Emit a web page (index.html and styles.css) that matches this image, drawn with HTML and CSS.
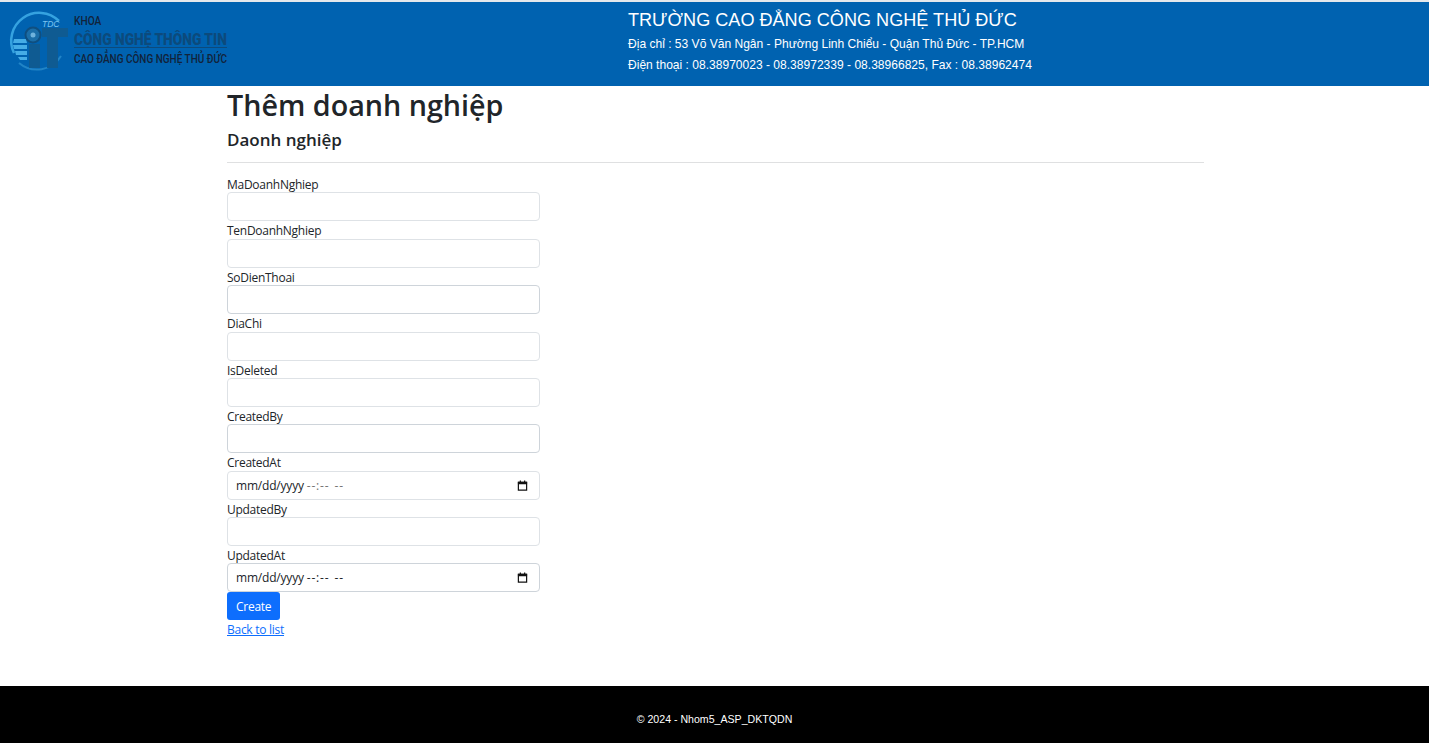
FILE: index.html
```html
<!DOCTYPE html>
<html lang="vi">
<head>
<meta charset="utf-8">
<title>Thêm doanh nghiệp</title>
<link rel="stylesheet" href="styles.css">
</head>
<body>
<header class="site-header">
  <div class="brand">
    <svg class="logo" viewBox="0 0 232 70" width="232" height="70" aria-label="Khoa Công nghệ thông tin">
      <path d="M14 47 A28 28 0 0 1 59 15" fill="none" stroke="#35a2e0" stroke-width="2.500"/>
      <path d="M19 57 A28 28 0 0 0 61 50" fill="none" stroke="#2184c6" stroke-width="2"/>
      <path d="M14 33h12l1 4H13zM13 39h14v4H14zM15 45h12v4H16zM18 51h9v3H20z" fill="#45ace6"/>
      <circle cx="33" cy="29" r="7.500" fill="#1b6ea8" stroke="#0f4f80" stroke-width="2"/>
      <circle cx="33" cy="29" r="2.500" fill="#6fb2dc"/>
      <path d="M29 38h11v24H29z" fill="#0f5b92"/>
      <path d="M42 22H68V31H58V62H47V31H42Z" fill="#0f5b92"/>
      <text x="42" y="21" class="logo-tdc">TDC</text>
      <text class="logo-khoa" transform="translate(74 19) scale(.85 1)">KHOA</text>
      <text class="logo-main" transform="translate(74 39) scale(.81 1)">CÔNG NGHỆ THÔNG TIN</text>
      <rect x="74" y="41" width="153" height="1" fill="#0c4a7c"/>
      <text class="logo-sub" transform="translate(74 57) scale(.8 1)">CAO ĐẲNG CÔNG NGHỆ THỦ ĐỨC</text>
    </svg>
  </div>
  <div class="school">
    <div class="school-name">TRƯỜNG CAO ĐẲNG CÔNG NGHỆ THỦ ĐỨC</div>
    <div class="school-line school-line-first">Địa chỉ : 53 Võ Văn Ngân - Phường Linh Chiểu - Quận Thủ Đức - TP.HCM</div>
    <div class="school-line">Điện thoại : 08.38970023 - 08.38972339 - 08.38966825, Fax : 08.38962474</div>
  </div>
</header>
<main class="content">
  <h1 class="page-title">Thêm doanh nghiệp</h1>
  <h4 class="section-title">Daonh nghiệp</h4>
  <hr class="rule">
  <form class="form">
    <label class="field"><span class="field-label">MaDoanhNghiep</span><input class="control" type="text"></label>
    <label class="field"><span class="field-label">TenDoanhNghiep</span><input class="control" type="text"></label>
    <label class="field"><span class="field-label">SoDienThoai</span><input class="control control-dark" type="text"></label>
    <label class="field"><span class="field-label">DiaChi</span><input class="control" type="text"></label>
    <label class="field"><span class="field-label">IsDeleted</span><input class="control" type="text"></label>
    <label class="field"><span class="field-label">CreatedBy</span><input class="control control-dark" type="text"></label>
    <div class="field"><span class="field-label">CreatedAt</span>
      <div class="control control-date">
        <span>mm/dd/yyyy</span><span class="time-muted">--:--</span><span class="ampm-muted">--</span>
        <svg class="calendar" viewBox="0 0 12 12" width="11" height="11"><path d="M1.500 2.500h9v8.500h-9z" fill="none" stroke="#111" stroke-width="1.300"/><path d="M1 2h10v2.500H1zM3 .5h1.300V3H3zM7.700 .5H9V3H7.700z" fill="#111"/></svg>
      </div>
    </div>
    <label class="field"><span class="field-label">UpdatedBy</span><input class="control" type="text"></label>
    <div class="field"><span class="field-label">UpdatedAt</span>
      <div class="control control-date control-dark">
        <span>mm/dd/yyyy</span><span class="time">--:--</span><span class="ampm">--</span>
        <svg class="calendar" viewBox="0 0 12 12" width="11" height="11"><path d="M1.500 2.500h9v8.500h-9z" fill="none" stroke="#111" stroke-width="1.300"/><path d="M1 2h10v2.500H1zM3 .5h1.300V3H3zM7.700 .5H9V3H7.700z" fill="#111"/></svg>
      </div>
    </div>
    <button class="submit" type="button">Create</button>
  </form>
  <a class="back" href="#">Back to list</a>
</main>
<footer class="site-footer">© 2024 - Nhom5_ASP_DKTQDN</footer>
</body>
</html>
```

FILE: styles.css
```css
* { box-sizing: border-box; }
html, body { height: 100%; }
body {
  margin: 0;
  display: flex;
  flex-direction: column;
  min-height: 743px;
  background: #fff;
  color: #212529;
  font-family: "Open Sans", "Noto Sans", sans-serif;
  font-size: 12px;
  letter-spacing: -0.27px;
  overflow: hidden;
}
.site-header {
  flex: none;
  height: 86px;
  border-top: 2px solid #e4e8ec;
  background: #0062b0;
  display: flex;
  color: #fff;
  font-family: "Liberation Sans", Arial, sans-serif;
  letter-spacing: 0;
}
.brand { width: 628px; flex: none; }
.logo { display: block; margin-top: 4px; }
.logo-tdc { font: italic 8.500px "Liberation Sans", sans-serif; fill: #7cc4ef; }
.logo-khoa { font: 500 12px "Roboto", sans-serif; fill: #12233a; }
.logo-main { font: 900 17px "Roboto", sans-serif; fill: #0c4a7c; }
.logo-sub { font: 500 12.500px "Roboto", sans-serif; fill: #12233a; }
.school { padding-top: 7px; }
.school-name { font-size: 18.100px; line-height: 22px; }
.school-line { font-size: 12.050px; line-height: 21px; }
.school-line-first { margin-top: 3px; }
.content { flex: 1; width: 977px; margin-left: 227px; }
.page-title {
  margin: 0;
  font-size: 28.700px;
  font-weight: 600;
  line-height: 38px;
  letter-spacing: 0;
}
.section-title {
  margin: 2px 0 0;
  font-size: 17px;
  font-weight: 600;
  line-height: 27px;
  letter-spacing: 0;
}
.rule {
  margin: 9px 0 12px;
  border: 0;
  border-top: 1px solid #dfe0e1;
}
.form { display: flex; flex-direction: column; align-items: flex-start; }
.field { display: block; width: 313px; }
.field-label { display: block; height: 17.375px; line-height: 20px; }
.control {
  display: block;
  width: 100%;
  height: 29px;
  padding: 0 8px;
  border: 1px solid #dee2e6;
  border-radius: 4px;
  background: #fff;
  color: #212529;
  font-family: inherit;
  font-size: 12px;
}
.control-dark { border-color: #ced4da; }
.control-date {
  display: flex;
  align-items: center;
  letter-spacing: -0.2px;
}
.time, .time-muted { margin-left: 3px; letter-spacing: 0.8px; }
.ampm, .ampm-muted { margin-left: 5px; letter-spacing: 1px; }
.time-muted, .ampm-muted { color: #757575; }
.calendar { margin-left: auto; margin-right: 3px; }
.submit {
  height: 28px;
  padding: 0 9px;
  border: 0;
  border-radius: 3px;
  background: #0d6efd;
  color: #fff;
  font-family: inherit;
  font-size: 12px;
  letter-spacing: inherit;
}
.back { display: inline-block; margin-top: 1px; color: #0d6efd; line-height: 17px; }
.site-footer {
  flex: none;
  height: 57px;
  background: #000;
  color: #fff;
  font-family: "Liberation Sans", Arial, sans-serif;
  font-size: 10.600px;
  letter-spacing: 0;
  display: flex;
  align-items: center;
  justify-content: center;
  padding-top: 9px;
}
```
